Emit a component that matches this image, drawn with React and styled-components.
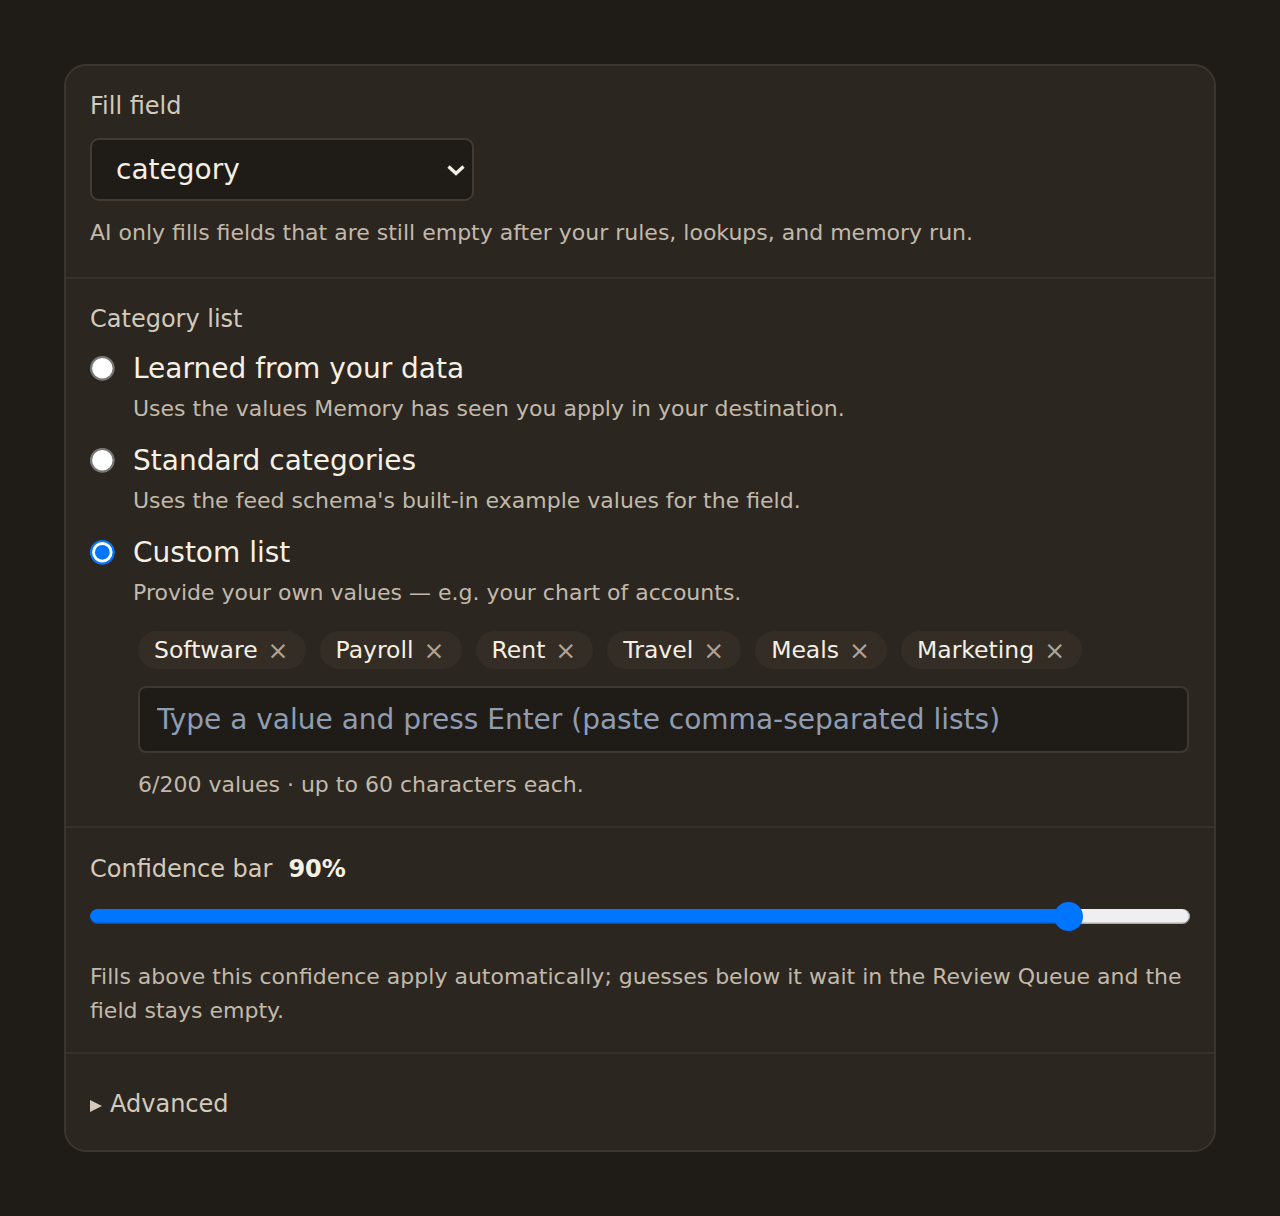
import React, { useState } from "react";
import styled, { createGlobalStyle } from "styled-components";

const GlobalStyle = createGlobalStyle`
  * {
    box-sizing: border-box;
  }
  body {
    margin: 0;
    background: #1f1b17;
    font-family: "DejaVu Sans", "Noto Sans", sans-serif;
    color: #f3ede1;
  }
`;

const categories = ["Software", "Payroll", "Rent", "Travel", "Meals", "Marketing"];

const sources = [
  {
    id: "learned",
    title: "Learned from your data",
    hint: "Uses the values Memory has seen you apply in your destination.",
  },
  {
    id: "standard",
    title: "Standard categories",
    hint: "Uses the feed schema's built-in example values for the field.",
  },
  {
    id: "custom",
    title: "Custom list",
    hint: "Provide your own values \u2014 e.g. your chart of accounts.",
  },
];

const THUMB = 29;

export default function App() {
  const [source, setSource] = useState("custom");
  const [values, setValues] = useState(categories);
  const [confidence, setConfidence] = useState(90);

  // where the blue part of the track stops: under the thumb's centre
  const fill = `calc(${THUMB / 2}px + ${confidence / 100} * (100% - ${THUMB}px))`;

  return (
    <Page>
      <GlobalStyle />
      <Card>
        {/* which field the AI should fill */}
        <Section $pad="23px 24px 27px">
          <Label>Fill field</Label>
          <SelectWrap>
            <Select defaultValue="category">
              <option value="category">category</option>
              <option value="vendor">vendor</option>
              <option value="memo">memo</option>
            </Select>
            <Chevron viewBox="0 0 20 12" aria-hidden="true">
              <path d="M2.5 2.5 L10 9.5 L17.5 2.5" />
            </Chevron>
          </SelectWrap>
          <Hint $top="15px">
            AI only fills fields that are still empty after your rules, lookups, and memory run.
          </Hint>
        </Section>

        {/* where the allowed values come from */}
        <Section $pad="23px 24px 24px">
          <Label>Category list</Label>
          <Options>
            {sources.map((s) => (
              <Option key={s.id}>
                <Radio
                  type="radio"
                  name="source"
                  checked={source === s.id}
                  onChange={() => setSource(s.id)}
                />
                <OptionTitle>{s.title}</OptionTitle>
                <OptionHint>{s.hint}</OptionHint>
              </Option>
            ))}
          </Options>

          <Editor>
            <Chips>
              {values.map((v) => (
                <Chip key={v}>
                  {v}
                  <ChipRemove
                    type="button"
                    onClick={() => setValues(values.filter((x) => x !== v))}
                  >
                    ×
                  </ChipRemove>
                </Chip>
              ))}
            </Chips>
            <ValueInput placeholder="Type a value and press Enter (paste comma-separated lists)" />
            <Count>{values.length}/200 values · up to 60 characters each.</Count>
          </Editor>
        </Section>

        {/* auto-apply threshold */}
        <Section $pad="24px 24px 24px">
          <Label>
            Confidence bar<Value>{confidence}%</Value>
          </Label>
          <Range
            type="range"
            min="0"
            max="100"
            value={confidence}
            onChange={(e) => setConfidence(Number(e.target.value))}
            style={{ "--fill": fill }}
          />
          <Hint $top="29px">
            Fills above this confidence apply automatically; guesses below it wait in the Review
            Queue and the field stays empty.
          </Hint>
        </Section>

        <Section $pad="33px 24px 28px">
          <Details>
            <Summary>
              <Marker />
              Advanced
            </Summary>
          </Details>
        </Section>
      </Card>
    </Page>
  );
}

// page shell
const Page = styled.div`
  padding: 64px;
`;

const Card = styled.div`
  background: #2b2620;
  border: 2px solid #3c352c;
  border-radius: 22px;
  overflow: hidden;
`;

const Section = styled.section`
  padding: ${(p) => p.$pad};
  & + & {
    border-top: 2px solid #38312a;
  }
`;

const Label = styled.div`
  font-size: 24px;
  line-height: 35px;
  color: #d3cabc;
`;

const Value = styled.strong`
  margin-left: 16px;
  color: #f6f0e4;
  font-weight: 700;
`;

const Hint = styled.p`
  margin: ${(p) => p.$top} 0 0;
  font-size: 22px;
  line-height: 34px;
  color: #c2b9ab;
`;

// field picker
const SelectWrap = styled.div`
  position: relative;
  width: 384px;
  margin-top: 14px;
`;

const Select = styled.select`
  appearance: none;
  width: 100%;
  height: 63px;
  padding: 0 50px 0 24px;
  background: #1f1c18;
  border: 2px solid #433b31;
  border-radius: 9px;
  color: #f6f0e4;
  font-family: inherit;
  font-size: 28px;
  outline: none;
`;

const Chevron = styled.svg`
  position: absolute;
  right: 8px;
  top: 50%;
  width: 20px;
  height: 12px;
  margin-top: -6px;
  fill: none;
  stroke: #f6f0e4;
  stroke-width: 3.4;
  pointer-events: none;
`;

// value source radios
const Options = styled.div`
  display: flex;
  flex-direction: column;
  gap: 15px;
  margin-top: 12px;
`;

const Option = styled.label`
  display: grid;
  grid-template-columns: 26px 1fr;
  column-gap: 17px;
  align-items: center;
  cursor: pointer;
`;

const Radio = styled.input`
  margin: 0 0 0 -0.5px;
  zoom: 2.05;
  cursor: pointer;
`;

const OptionTitle = styled.span`
  font-size: 28px;
  line-height: 40px;
  color: #f6f0e4;
`;

const OptionHint = styled.span`
  grid-column: 2;
  margin-top: 3px;
  font-size: 22px;
  line-height: 34px;
  color: #c2b9ab;
`;

// custom value editor
const Editor = styled.div`
  margin: 21px 0 0 48px;
`;

const Chips = styled.div`
  display: flex;
  flex-wrap: wrap;
  gap: 14px;
`;

const Chip = styled.span`
  display: inline-flex;
  align-items: center;
  gap: 10px;
  height: 38px;
  padding: 0 17px 0 16px;
  border-radius: 19px;
  background: #342d25;
  font-size: 23.5px;
  color: #f6f0e4;
`;

const ChipRemove = styled.button`
  padding: 0;
  border: 0;
  background: none;
  font-family: inherit;
  font-size: 25px;
  line-height: 1;
  color: #aca497;
  cursor: pointer;
`;

const ValueInput = styled.input`
  display: block;
  width: calc(100% - 1px);
  height: 67px;
  margin-top: 17px;
  padding: 0 17px;
  background: #1f1c18;
  border: 2px solid #3f382f;
  border-radius: 8px;
  font-family: inherit;
  font-size: 28px;
  color: #f6f0e4;
  outline: none;

  &::placeholder {
    color: #8f9cb1;
  }
`;

const Count = styled.div`
  margin-top: 15px;
  font-size: 22px;
  line-height: 34px;
  color: #c2b9ab;
`;

// confidence slider: blue up to the thumb, light grey after it
const Range = styled.input`
  appearance: none;
  display: block;
  width: 100%;
  height: ${THUMB}px;
  margin: 15px 0 0;
  background: transparent;
  cursor: pointer;

  &::-webkit-slider-runnable-track {
    height: 15px;
    border-radius: 8px;
    background: linear-gradient(
      to right,
      #0075ff 0,
      #0075ff var(--fill),
      #efefef var(--fill),
      #efefef 100%
    );
    box-shadow: inset 0 -1.5px 0 rgba(0, 0, 0, 0.28), inset -1.5px 0 0 rgba(0, 0, 0, 0.2);
  }

  &::-webkit-slider-thumb {
    appearance: none;
    width: ${THUMB}px;
    height: ${THUMB}px;
    margin-top: -7px;
    border: 0;
    border-radius: 50%;
    background: #0075ff;
  }
`;

// collapsed advanced settings
const Details = styled.details`
  font-size: 24px;
  line-height: 35px;
  color: #d3cabc;
`;

const Summary = styled.summary`
  display: flex;
  align-items: center;
  list-style: none;
  cursor: pointer;

  &::-webkit-details-marker {
    display: none;
  }
`;

const Marker = styled.span`
  width: 0;
  height: 0;
  margin: 2px 8px 0 0;
  border-left: 12px solid #d3cabc;
  border-top: 6px solid transparent;
  border-bottom: 6px solid transparent;
`;
